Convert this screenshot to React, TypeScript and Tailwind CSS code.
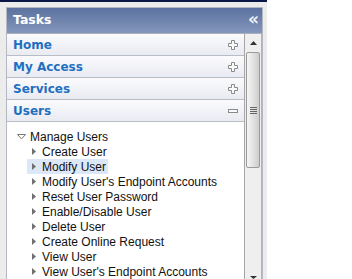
import React from "react";

const items = [
  "Create User",
  "Modify User",
  "Modify User's Endpoint Accounts",
  "Reset User Password",
  "Enable/Disable User",
  "Delete User",
  "Create Online Request",
  "View User",
  "View User's Endpoint Accounts",
];

function Plus() {
  return (
    <svg width="10" height="10" viewBox="0 0 10 10">
      <path d="M3.5 0.5H6.5V3.5H9.5V6.5H6.5V9.5H3.5V6.5H0.5V3.5H3.5Z" fill="#fafafa" stroke="#8a8a8a" strokeWidth="1" />
    </svg>
  );
}

function Minus() {
  return (
    <svg width="10" height="4" viewBox="0 0 10 4">
      <rect x="0.5" y="0.5" width="9" height="3" fill="#fafafa" stroke="#8a8a8a" strokeWidth="1" />
    </svg>
  );
}

function Row({ label, open }: { label: string; open?: boolean }) {
  return (
    <div className="h-[23px] flex items-center justify-between pl-[6px] pr-[6px] border-b border-[#b9bdc6] bg-gradient-to-b from-[#fbfbfd] to-[#e9ebf2]">
      <span className="text-[12px] font-bold text-[#1e6fc1]" style={{ fontFamily: '"DejaVu Sans", sans-serif' }}>
        {label}
      </span>
      {open ? <Minus /> : <Plus />}
    </div>
  );
}

export default function App() {
  return (
    <div className="w-[352px] h-[279px] bg-white overflow-hidden">
      <div className="w-[267px] h-[279px] flex flex-col bg-[#ececec]">
        <div className="h-[2px] bg-[#0a1848]" />
        <div className="flex-1 pl-[6px] pr-[4px] pt-[5px] flex flex-col min-h-0">
          <div className="flex-1 flex flex-col border-l border-t border-r border-[#b4b8c0] bg-white min-h-0">
            <div className="h-[26px] flex items-center justify-between pl-[6px] pr-[3px] bg-gradient-to-b from-[#5b72a0] to-[#8496ba] border-b border-[#a9afbb]">
              <span className="text-[12.5px] font-bold text-white" style={{ fontFamily: '"DejaVu Sans", sans-serif' }}>
                Tasks
              </span>
              <span className="text-[17px] font-bold text-[#f2f4f8] leading-none pb-[2px]" style={{ fontFamily: '"DejaVu Sans", sans-serif' }}>
                «
              </span>
            </div>
            <div className="flex-1 flex min-h-0">
              <div className="flex-1 flex flex-col border-r border-[#a6a6a6]">
                <Row label="Home" />
                <Row label="My Access" />
                <Row label="Services" />
                <Row label="Users" open />
                <div className="pt-[7px] text-[12px] text-[#111]" style={{ fontFamily: '"Liberation Sans", Arial, sans-serif' }}>
                  <div className="h-[15px] flex items-center pl-[10px]">
                    <svg width="9" height="6" viewBox="0 0 9 6" className="mr-[4px]">
                      <path d="M0.5 0.5H8.5L4.5 5Z" fill="none" stroke="#777" strokeWidth="1" />
                    </svg>
                    <span>Manage Users</span>
                  </div>
                  {items.map((t) => (
                    <div key={t} className="h-[15px] flex items-center pl-[20px]">
                      <div
                        className={
                          "flex items-center h-[15px] pl-[5px] pr-[2px] " +
                          (t === "Modify User" ? "bg-[#dce7f8]" : "")
                        }
                      >
                        <svg width="4" height="7" viewBox="0 0 4 7" className="mr-[6px]">
                          <path d="M0 0L4 3.5L0 7Z" fill="#707070" />
                        </svg>
                        <span className="whitespace-nowrap">{t}</span>
                      </div>
                    </div>
                  ))}
                </div>
              </div>
              <div className="w-[17px] flex flex-col bg-[#efefef] border-r border-[#b4b4b4] relative">
                <div className="h-[18px] flex items-center justify-center">
                  <svg width="7" height="4" viewBox="0 0 7 4">
                    <path d="M0 4L3.5 0L7 4Z" fill="#333" />
                  </svg>
                </div>
                <div className="mx-[1px] h-[116px] rounded-[2px] border border-[#9a9a9a] bg-gradient-to-r from-[#f6f6f6] via-[#e2e2e2] to-[#cdcdcd] flex items-center justify-center">
                  <div className="flex flex-col gap-[1px]">
                    <div className="w-[7px] h-[1px] bg-[#666]" />
                    <div className="w-[7px] h-[1px] bg-[#666]" />
                    <div className="w-[7px] h-[1px] bg-[#666]" />
                    <div className="w-[7px] h-[1px] bg-[#666]" />
                  </div>
                </div>
                <div className="absolute bottom-[0px] left-0 right-0 h-[6px] flex items-end justify-center">
                  <svg width="7" height="3" viewBox="0 0 7 3">
                    <path d="M0 0L3.5 3L7 0Z" fill="#333" />
                  </svg>
                </div>
              </div>
            </div>
          </div>
        </div>
      </div>
    </div>
  );
}
